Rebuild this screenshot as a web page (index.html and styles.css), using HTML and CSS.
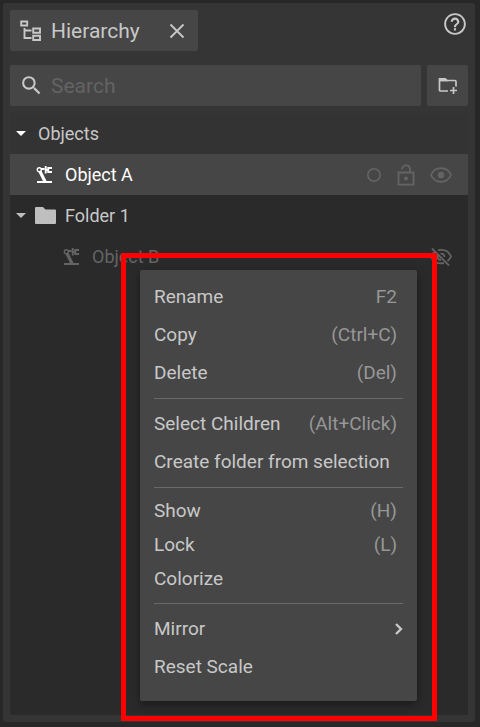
FILE: index.html
```html
<!DOCTYPE html>
<html lang="en">
<head>
<meta charset="utf-8">
<meta name="viewport" content="width=device-width, initial-scale=1">
<title>Hierarchy</title>
<link rel="stylesheet" href="styles.css">
</head>
<body>
<svg class="defs" aria-hidden="true">
  <symbol id="arm" viewBox="0 0 18 18">
    <path d="M1 16h15" stroke="currentColor" stroke-width="2" fill="none"/>
    <path d="M4 5.500l5 10" stroke="currentColor" stroke-width="3.200" fill="none"/>
    <circle cx="3.300" cy="3.800" r="2" stroke="currentColor" stroke-width="1.400" fill="none"/>
    <path d="M5 3h3.500M9.700 0v7.500M16 2h-3.800v4H16M9.700 4h2.500" stroke="currentColor" stroke-width="1.900" fill="none"/>
  </symbol>
</svg>
<main class="panel">
  <header class="titlebar">
    <div class="tab">
      <svg class="tab-icon" width="22" height="22" viewBox="0 0 22 22" fill="none" stroke="currentColor" stroke-width="1.900" aria-hidden="true">
        <path d="M1.200 1.500h6v4h-6zM13.200 8.500h6.800v4.200h-6.800zM13.200 15.800h6.800v4.200h-6.800zM4.500 8v10h7M4.500 10.500h7"/>
      </svg>
      <h1>Hierarchy</h1>
      <button class="plain" type="button" aria-label="Close">
        <svg width="16" height="16" viewBox="0 0 16 16" fill="none" stroke="currentColor" stroke-width="1.800"><path d="M1.500 1.500l13 13M14.500 1.500l-13 13"/></svg>
      </button>
    </div>
    <button class="plain help" type="button" aria-label="Help">
      <svg width="26" height="26" viewBox="0 0 24 24" fill="currentColor"><path d="M11 18h2v-2h-2v2zm1-16C6.480 2 2 6.480 2 12s4.480 10 10 10 10-4.480 10-10S17.520 2 12 2zm0 18.200c-4.500 0-8.200-3.700-8.200-8.200S7.500 3.800 12 3.800s8.200 3.700 8.200 8.200-3.700 8.200-8.200 8.200zM12 6c-2.210 0-4 1.790-4 4h2c0-1.100.9-2 2-2s2 .9 2 2c0 2-3 1.750-3 5h2c0-2.250 3-2.500 3-5 0-2.210-1.790-4-4-4z"/></svg>
    </button>
  </header>
  <div class="tools">
    <label class="search">
      <svg width="25" height="25" viewBox="0 0 24 24" fill="currentColor" aria-hidden="true"><path d="M15.500 14h-.790l-.280-.270A6.470 6.470 0 0 0 16 9.500 6.500 6.500 0 1 0 9.500 16c1.610 0 3.090-.590 4.230-1.570l.270.280v.790l5 4.990L20.490 19l-4.990-5zm-6 0C7.010 14 5 11.990 5 9.500S7.010 5 9.500 5 14 7.010 14 9.500 11.990 14 9.500 14z"/></svg>
      <input type="search" placeholder="Search" aria-label="Search">
    </label>
    <button class="new-folder" type="button" aria-label="New folder">
      <svg width="20" height="18" viewBox="0 0 20 18" fill="none" stroke="currentColor" stroke-width="1.700"><path d="M10 14H2.500Q1.500 14 1.500 13V3.500h15.500Q18 3.500 18 4.500V9.500M1.500 4V1.800h5.500L9 3.500"/><path d="M2 1.800h5L8.500 3.500H2z" fill="currentColor"/><path d="M15.500 10v7M12 13.500h7"/></svg>
    </button>
  </div>
  <section class="tree">
    <div class="row head"><svg class="caret" width="10" height="5" viewBox="0 0 10 5" fill="currentColor"><path d="M0 0h10L5 5z"/></svg><span>Objects</span></div>
    <div class="row selected">
      <svg class="arm" width="18" height="18"><use href="#arm"/></svg><span>Object A</span>
      <div class="actions">
        <button class="plain" type="button" aria-label="Color"><svg width="16" height="16" viewBox="0 0 16 16" fill="none" stroke="currentColor" stroke-width="1.600"><circle cx="8" cy="8" r="6.200"/></svg></button>
        <button class="plain" type="button" aria-label="Lock object"><svg width="18" height="22" viewBox="0 0 18 22" fill="none" stroke="currentColor" stroke-width="1.800"><path d="M1.500 8.500h15v12.200h-15zM5 5.500c0-5.500 8-5.500 8 0v3"/><circle cx="9" cy="14.500" r="2" fill="currentColor" stroke="none"/></svg></button>
        <button class="plain" type="button" aria-label="Hide object"><svg width="22" height="16" viewBox="0 0 22 16" fill="none" stroke="currentColor" stroke-width="1.800"><path d="M1 8Q4 1.200 11 1.200T21 8Q18 14.800 11 14.800T1 8z"/><circle cx="11" cy="8" r="3.200" fill="currentColor" stroke="none"/></svg></button>
      </div>
    </div>
    <div class="row folder"><svg class="caret" width="10" height="5" viewBox="0 0 10 5" fill="currentColor"><path d="M0 0h10L5 5z"/></svg><svg width="21" height="17" viewBox="0 0 21 17" fill="currentColor"><path d="M1 0h7l2.500 2.500H20q1 0 1 1V16q0 1-1 1H1q-1 0-1-1V1q0-1 1-1z"/></svg><span>Folder 1</span></div>
    <div class="row hidden-object">
      <svg class="arm" width="18" height="18"><use href="#arm"/></svg><span>Object B</span>
      <div class="actions">
        <button class="plain" type="button" aria-label="Show object"><svg width="22" height="18" viewBox="0 0 22 18" fill="none" stroke="currentColor" stroke-width="1.800"><path d="M8 2.200Q17.500.200 21 8.500q-1 2.700-3.500 4.500M4.500 4Q2 6 1 8.500q3.500 8.500 13 6.500M2 .5l17 17M10.500 5.700q3.700-.3 4 3.300M7.800 7.500q-.8 4 3.200 4.500"/></svg></button>
      </div>
    </div>
  </section>
  <div class="highlight">
    <div class="menu" role="menu">
      <div class="group">
        <button role="menuitem" type="button">Rename <kbd>F2</kbd></button>
        <button role="menuitem" type="button">Copy <kbd>(Ctrl+C)</kbd></button>
        <button role="menuitem" type="button">Delete <kbd>(Del)</kbd></button>
      </div>
      <div class="group">
        <button role="menuitem" type="button">Select Children <kbd>(Alt+Click)</kbd></button>
        <button role="menuitem" type="button">Create folder from selection</button>
      </div>
      <div class="group compact">
        <button role="menuitem" type="button">Show <kbd>(H)</kbd></button>
        <button role="menuitem" type="button">Lock <kbd>(L)</kbd></button>
        <button role="menuitem" type="button">Colorize</button>
      </div>
      <div class="group">
        <button class="submenu" role="menuitem" type="button" aria-haspopup="true">Mirror <svg width="8" height="12" viewBox="0 0 8 12" fill="none" stroke="currentColor" stroke-width="2.400"><path d="M1 1l5 5-5 5"/></svg></button>
        <button role="menuitem" type="button">Reset Scale</button>
      </div>
    </div>
  </div>
</main>
</body>
</html>
```

FILE: styles.css
```css
* {
  box-sizing: border-box;
}

body {
  margin: 0;
  padding: 3px 5px 5px 3px;
  min-height: 100vh;
  display: flex;
  background: #272727;
  color: #c8c8c8;
  font: 18px/24px Roboto, sans-serif;
}

button,
input {
  font: inherit;
  color: inherit;
}

svg {
  display: block;
  flex: none;
}

.defs {
  position: absolute;
  width: 0;
  height: 0;
}

.panel {
  position: relative;
  flex: 1;
  display: flex;
  flex-direction: column;
  padding: 7px;
  background: #353535;
  border-radius: 3px;
}

.plain {
  display: flex;
  padding: 0;
  border: 0;
  background: none;
}

.titlebar {
  display: flex;
  justify-content: space-between;
  align-items: flex-start;
}

.tab {
  display: flex;
  align-items: center;
  height: 41px;
  padding: 0 13px 0 10px;
  background: #464646;
  border-radius: 2px;
}

.tab h1 {
  margin: 0 29px 0 9px;
  font-size: 21px;
  font-weight: 400;
}

.help {
  margin: 1px 0 0;
}

.tools {
  display: flex;
  gap: 6px;
  margin-top: 14px;
}

.search {
  flex: 1;
  display: flex;
  align-items: center;
  gap: 7px;
  height: 41px;
  padding: 0 9px;
  background: #464646;
  border-radius: 2px;
}

.search input {
  flex: 1;
  min-width: 0;
  padding: 0;
  border: 0;
  outline: 0;
  background: none;
  font-size: 21px;
}

.search input::placeholder {
  color: #636363;
}

.new-folder {
  display: flex;
  align-items: center;
  justify-content: center;
  width: 41px;
  padding: 0;
  border: 0;
  border-radius: 2px;
  background: #464646;
}

.tree {
  flex: 1;
  margin-top: 7px;
  background: #2a2a2a;
  border-radius: 2px;
}

.row {
  display: flex;
  align-items: center;
  height: 41px;
}

.head {
  gap: 12px;
  padding-left: 6px;
  background: #333333;
}

.head .caret,
.selected {
  color: #ffffff;
}

.selected {
  gap: 11px;
  padding-left: 26px;
  background: #464646;
}

.folder {
  gap: 9px;
  padding-left: 6px;
}

.folder svg {
  color: #bfbfbf;
}

.hidden-object {
  gap: 11px;
  padding-left: 53px;
  color: #646464;
}

.actions {
  display: flex;
  align-items: center;
  gap: 15px;
  margin-left: auto;
  padding-right: 16px;
  color: #646464;
}

.highlight {
  position: absolute;
  top: 250px;
  left: 118px;
  right: 38px;
  padding: 12px 15px 15px 14px;
  border: 5px solid #ff0000;
}

.menu {
  padding: 8px 14px 15px;
  background: #464646;
  border-radius: 2px;
  box-shadow: 0 3px 8px #00000066;
  font-size: 19px;
}

.group + .group {
  margin-top: 6px;
  padding-top: 6px;
  border-top: 1px solid #696969;
}

.group button {
  display: flex;
  align-items: center;
  justify-content: space-between;
  width: 100%;
  height: 38px;
  padding: 0 6px 0 0;
  border: 0;
  background: none;
  white-space: nowrap;
}

.group.compact {
  padding-bottom: 1px;
}

.group.compact button {
  height: 34px;
}

.group .submenu {
  padding-right: 0;
}

kbd {
  font: inherit;
  color: #979797;
}
```
